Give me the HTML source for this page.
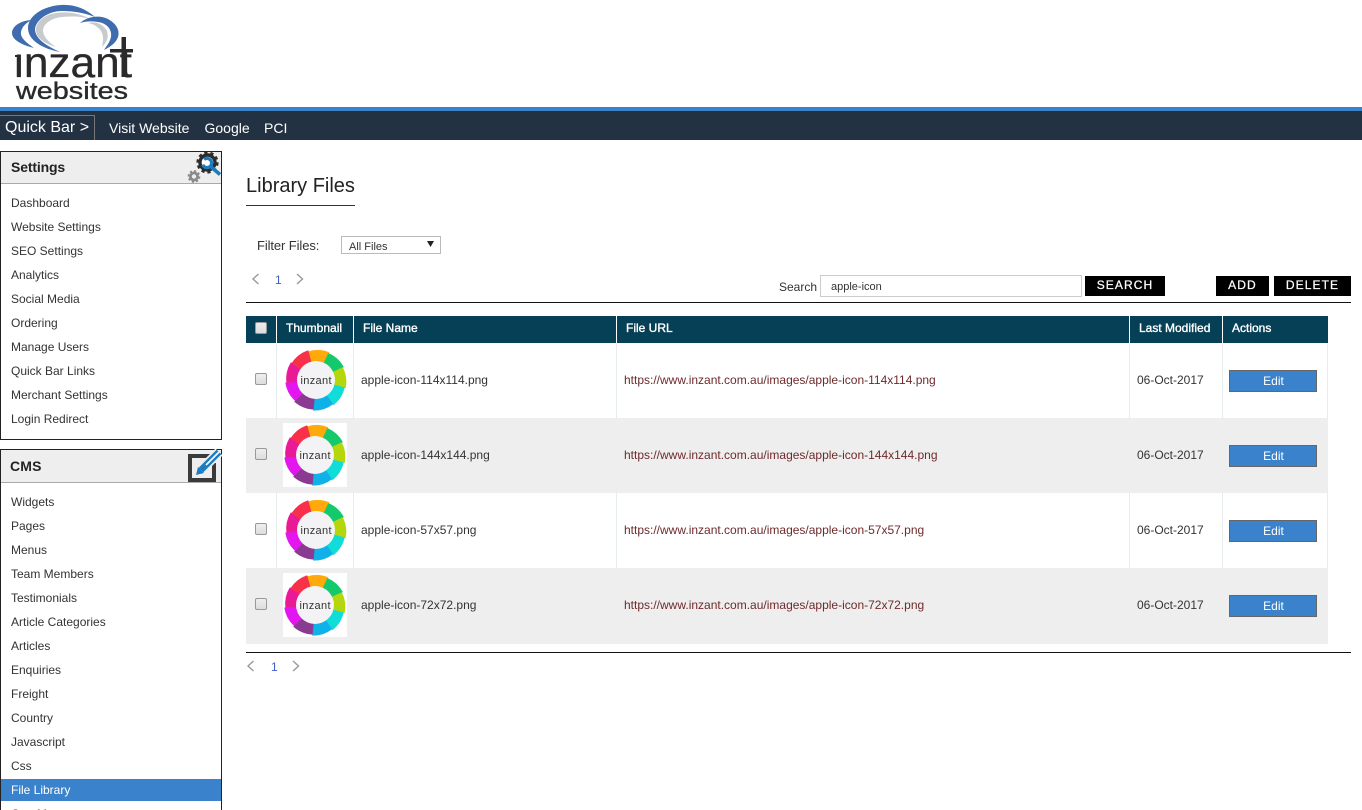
<!DOCTYPE html>
<html>
<head>
<meta charset="utf-8">
<title>Library Files</title>
<style>
html,body{margin:0;padding:0;width:1362px;height:810px;overflow:hidden;background:#fff}
body{position:relative;font-family:"Liberation Sans",Arial,sans-serif;font-size:12px;color:#333}
.a{position:absolute;white-space:nowrap}
.nav{color:#fff;font-size:14px;line-height:18px;top:119px}
.panel{position:absolute;left:0;width:220px;border:1px solid #222;background:#fff;box-sizing:content-box}
.ph{position:absolute;left:0;right:0;top:0;background:#eee;border-bottom:1px solid #aaa;box-sizing:border-box}
.ph b{position:absolute;font-size:14px;line-height:18px;color:#222;letter-spacing:-.15px}
.m{position:absolute;left:10px;line-height:16px;color:#333;white-space:nowrap}
.btn{position:absolute;top:276px;height:20px;background:#000;color:#fff;font-size:12px;line-height:19px;letter-spacing:1.1px;text-align:center;-webkit-text-stroke:.25px #fff}
.line{position:absolute;left:246px;width:1105px;height:1px;background:#111}
.row{position:absolute;left:246px;width:1082px;height:75px}
.row.g{background:#eee}
.v{position:absolute;top:0;bottom:0;width:1px;background:#e6ecee}
.hd .v{background:#fff}
.t{position:absolute;top:29px;line-height:16px;white-space:nowrap;color:#333}
.u{color:#6e2a2a}
.hd{position:absolute;left:246px;top:316px;width:1082px;height:27px;background:#064056}
.hd span{position:absolute;top:4px;line-height:16px;color:#fff;white-space:nowrap;-webkit-text-stroke:.35px #fff}
.cb{position:absolute;left:9px;top:30px;width:12px;height:12px;box-sizing:border-box;background:linear-gradient(#eee,#ddd);border:1px solid #999;border-radius:2px}
.e{position:absolute;left:983px;top:27px;width:88px;height:22px;box-sizing:border-box;background:#3a82cc;border:1px solid #666;color:#fff;line-height:20px;text-align:center;padding-left:1px}
.th{position:absolute;left:37px;top:5px;width:64px;height:64px}
.w{background:#fff}
.pg{position:absolute;color:#3f5fc4;line-height:16px}
svg{position:absolute;overflow:visible}
</style>
</head>
<body>
<svg width="0" height="0" style="left:0;top:0">
<defs>
<path id="seg" d="M-6.2 -16.9L-10.1 -27.7Q0 -31.8 10.4 -28.7L6.2 -16.9Z" stroke-width=".4"/>
<symbol id="ring" viewBox="-32 -32 64 64" overflow="visible">
<use href="#seg" fill="#ffa90a" stroke="#ffa90a" transform="rotate(5)"/>
<use href="#seg" fill="#14c96c" stroke="#14c96c" transform="rotate(45)"/>
<use href="#seg" fill="#b4d60a" stroke="#b4d60a" transform="rotate(85)"/>
<use href="#seg" fill="#10dcd8" stroke="#10dcd8" transform="rotate(125)"/>
<use href="#seg" fill="#0fb2e8" stroke="#0fb2e8" transform="rotate(165)"/>
<use href="#seg" fill="#8a3a90" stroke="#8a3a90" transform="rotate(205)"/>
<use href="#seg" fill="#e316f0" stroke="#e316f0" transform="rotate(245)"/>
<use href="#seg" fill="#e81a96" stroke="#e81a96" transform="rotate(285)"/>
<use href="#seg" fill="#f8304a" stroke="#f8304a" transform="rotate(325)"/>
<circle r="19" fill="#f3f3f5"/>
</symbol>
</defs>
</svg>

<!-- Logo -->
<svg style="left:0;top:0" width="140" height="106" viewBox="0 0 140 106">
<text x="14" y="77" font-family="Liberation Sans" font-size="42.5" fill="#2a2a2a" stroke="#2a2a2a" stroke-width=".3" textLength="118" lengthAdjust="spacingAndGlyphs">inzant</text>
<rect x="12" y="34" width="12" height="20.5" fill="#fff"/>
<rect x="15" y="55" width="5" height="2" fill="#2a2a2a"/>
<rect x="121.5" y="37" width="4.5" height="40" fill="#2a2a2a"/>
<rect x="110" y="49" width="23" height="3.5" fill="#2a2a2a"/>
<path d="M95 17C85 8 73 4 61 5C43 6 28 16 28 28C28 41 44 49 60 52C47 46 35 39 35 29C36 20 48 11 62 11C74 11 85 13 95 17Z" fill="#3f6cae"/>
<path d="M31 20C19 21 12 27 12 33C12 40 22 45 34 48C27 43 20 38 21 32C22 27 25 24 31 20Z" fill="#3f6cae"/>
<path d="M92 20C82 14 68 11 56 13C42 15 35 24 36 31C37 39 46 44 56 47C48 42 43 36 43 30C44 23 52 18 62 17C72 16 83 16 92 20Z" fill="#c8cbce"/>
<path d="M80 23C88 16 100 15 108 19C117 24 120 31 118 37C116 43 110 47 104 50C108 44 112 39 111 33C110 27 105 23 98 22C92 21 86 21 80 23Z" fill="#3f6cae"/>
<path d="M88 23C96 21 103 24 107 31C109 37 107 42 102 47C103 41 104 36 101 31C98 27 94 24 88 23Z" fill="#c8cbce"/>
<text x="16" y="99" font-family="Liberation Sans" font-size="24" fill="#2a2a2a" stroke="#2a2a2a" stroke-width=".35" textLength="112" lengthAdjust="spacingAndGlyphs">websites</text>
</svg>

<!-- Top bars -->
<div class="a" style="left:0;top:107px;width:1362px;height:4px;background:#3a82cc"></div>
<div class="a" style="left:0;top:111px;width:1362px;height:29px;background:#233243"></div>
<div class="a" style="left:-1px;top:115px;width:96px;height:25px;border:1px solid #777;border-bottom:0;box-sizing:border-box"></div>
<div class="a" style="left:5px;top:119px;color:#fff;font-size:16px;line-height:18px">Quick Bar &gt;</div>
<div class="a nav" style="left:109px">Visit Website</div>
<div class="a nav" style="left:204.5px">Google</div>
<div class="a nav" style="left:264px">PCI</div>

<!-- Settings panel -->
<div class="panel" style="top:151px;height:287px">
  <div class="ph" style="height:32px"><b style="left:10px;top:6px">Settings</b></div>
  <div class="m" style="top:43px">Dashboard</div>
  <div class="m" style="top:67px">Website Settings</div>
  <div class="m" style="top:91px">SEO Settings</div>
  <div class="m" style="top:115px">Analytics</div>
  <div class="m" style="top:139px">Social Media</div>
  <div class="m" style="top:163px">Ordering</div>
  <div class="m" style="top:187px">Manage Users</div>
  <div class="m" style="top:211px">Quick Bar Links</div>
  <div class="m" style="top:235px">Merchant Settings</div>
  <div class="m" style="top:259px">Login Redirect</div>
</div>
<svg style="left:184px;top:150px" width="38" height="36" viewBox="0 0 38 36">
<circle cx="23.5" cy="12.5" r="7.5" fill="#fff" stroke="#2c2c2c" stroke-width="3.4"/>
<circle cx="23.5" cy="12.5" r="9.8" fill="none" stroke="#2c2c2c" stroke-width="2.6" stroke-dasharray="3.2 2.9"/>
<circle cx="23" cy="13" r="4.6" fill="none" stroke="#1c7cc0" stroke-width="3.2" stroke-dasharray="23 6" transform="rotate(-130 23 13)"/>
<path d="M26 16L36 24.5" stroke="#1c7cc0" stroke-width="3.6" fill="none"/>
<circle cx="10" cy="26.5" r="3.6" fill="none" stroke="#8a8a8a" stroke-width="2.8"/>
<circle cx="10" cy="26.5" r="5.5" fill="none" stroke="#8a8a8a" stroke-width="1.8" stroke-dasharray="2.2 2.1"/>
</svg>

<!-- CMS panel -->
<div class="panel" style="top:449px;height:380px">
  <div class="ph" style="height:33px"><b style="left:9px;top:7px;letter-spacing:.2px">CMS</b></div>
  <div class="m" style="top:44px">Widgets</div>
  <div class="m" style="top:68px">Pages</div>
  <div class="m" style="top:92px">Menus</div>
  <div class="m" style="top:116px">Team Members</div>
  <div class="m" style="top:140px">Testimonials</div>
  <div class="m" style="top:164px">Article Categories</div>
  <div class="m" style="top:188px">Articles</div>
  <div class="m" style="top:212px">Enquiries</div>
  <div class="m" style="top:236px">Freight</div>
  <div class="m" style="top:260px">Country</div>
  <div class="m" style="top:284px">Javascript</div>
  <div class="m" style="top:308px">Css</div>
  <div style="position:absolute;left:0;top:329px;width:220px;height:22px;background:#3a82cc"></div>
  <div class="m" style="top:332px;color:#fff">File Library</div>
  <div class="m" style="top:356px">Cart Management</div>
</div>
<svg style="left:186px;top:449px" width="36" height="36" viewBox="0 0 36 36">
<path d="M24 7H4V31H28V14" fill="none" stroke="#3a3a3a" stroke-width="4"/>
<path d="M14 22L33 3" stroke="#eee" stroke-width="10" fill="none"/>
<path d="M15 21L33 3" stroke="#1c7cc0" stroke-width="6.5" fill="none"/>
<path d="M10 26L12 18L18 24Z" fill="#1c7cc0"/>
<path d="M20 16L33 3" stroke="#fff" stroke-width="1.6" fill="none"/>
</svg>

<!-- Heading -->
<div class="a" style="left:246px;top:174px;font-size:20px;line-height:24px;color:#222">Library Files</div>
<div class="a" style="left:246px;top:205px;width:109px;height:1px;background:#333"></div>

<!-- Filter -->
<div class="a" style="left:257px;top:238px;font-size:13px;line-height:16px;letter-spacing:-.1px">Filter Files:</div>
<div class="a" style="left:341px;top:236px;width:100px;height:18px;box-sizing:border-box;border:1px solid #bbb;background:#fff"></div>
<div class="a" style="left:349px;top:239px;font-size:11px;line-height:16px">All Files</div>
<svg style="left:427px;top:241px" width="8" height="7" viewBox="0 0 8 7"><path d="M0 0H7L3.5 6Z" fill="#222"/></svg>

<!-- Pagination top -->
<svg style="left:251px;top:273px" width="10" height="12" viewBox="0 0 10 12"><path d="M7.5 1L2 6L7.5 11" fill="none" stroke="#999" stroke-width="1.4"/></svg>
<div class="pg" style="left:275px;top:272px">1</div>
<svg style="left:295px;top:273px" width="10" height="12" viewBox="0 0 10 12"><path d="M2 1L7.5 6L2 11" fill="none" stroke="#999" stroke-width="1.4"/></svg>

<!-- Search and buttons -->
<div class="a" style="left:779px;top:279px;line-height:16px">Search</div>
<div class="a" style="left:820px;top:275px;width:262px;height:22px;box-sizing:border-box;border:1px solid #ccc;background:#fff"></div>
<div class="a" style="left:831px;top:279px;font-size:11px;line-height:16px">apple-icon</div>
<div class="btn" style="left:1085px;width:80px">SEARCH</div>
<div class="btn" style="left:1216px;width:53px">ADD</div>
<div class="btn" style="left:1274px;width:77px">DELETE</div>
<div class="line" style="top:302px"></div>

<!-- Table header -->
<div class="hd">
  <div class="cb" style="top:6px"></div>
  <div class="v" style="left:30px"></div>
  <div class="v" style="left:107px"></div>
  <div class="v" style="left:370px"></div>
  <div class="v" style="left:883px"></div>
  <div class="v" style="left:976px"></div>
  <span style="left:40px">Thumbnail</span>
  <span style="left:117px">File Name</span>
  <span style="left:380px">File URL</span>
  <span style="left:893px">Last Modified</span>
  <span style="left:986px">Actions</span>
</div>

<!-- Row 1 -->
<div class="row" style="top:343px">
  <div class="v" style="left:30px"></div><div class="v" style="left:107px"></div><div class="v" style="left:370px"></div><div class="v" style="left:883px"></div><div class="v" style="left:976px"></div><div class="v" style="left:1081px"></div>
  <div class="cb"></div>
  <svg style="left:38px;top:5px" width="64" height="64"><use href="#ring"/></svg>
  <svg style="left:38px;top:5px" width="64" height="64" viewBox="0 0 64 64"><text x="16.5" y="36" textLength="31" font-family="Liberation Sans" font-size="11" fill="#333">inzant</text></svg>
  <div class="t" style="left:115px">apple-icon-114x114.png</div>
  <div class="t u" style="left:378px">https://www.inzant.com.au/images/apple-icon-114x114.png</div>
  <div class="t" style="left:891px">06-Oct-2017</div>
  <div class="e">Edit</div>
</div>

<!-- Row 2 -->
<div class="row g" style="top:418px">
  <div class="th w"></div>
  <div class="cb"></div>
  <svg style="left:37px;top:5px" width="64" height="64"><use href="#ring"/></svg>
  <svg style="left:37px;top:5px" width="64" height="64" viewBox="0 0 64 64"><text x="16.5" y="36" textLength="31" font-family="Liberation Sans" font-size="11" fill="#333">inzant</text></svg>
  <div class="t" style="left:115px">apple-icon-144x144.png</div>
  <div class="t u" style="left:378px">https://www.inzant.com.au/images/apple-icon-144x144.png</div>
  <div class="t" style="left:891px">06-Oct-2017</div>
  <div class="e">Edit</div>
</div>

<!-- Row 3 -->
<div class="row" style="top:493px">
  <div class="v" style="left:30px"></div><div class="v" style="left:107px"></div><div class="v" style="left:370px"></div><div class="v" style="left:883px"></div><div class="v" style="left:976px"></div><div class="v" style="left:1081px"></div>
  <div class="cb"></div>
  <svg style="left:38px;top:5px" width="64" height="64"><use href="#ring"/></svg>
  <svg style="left:38px;top:5px" width="64" height="64" viewBox="0 0 64 64"><text x="16.5" y="36" textLength="31" font-family="Liberation Sans" font-size="11" fill="#333">inzant</text></svg>
  <div class="t" style="left:115px">apple-icon-57x57.png</div>
  <div class="t u" style="left:378px">https://www.inzant.com.au/images/apple-icon-57x57.png</div>
  <div class="t" style="left:891px">06-Oct-2017</div>
  <div class="e">Edit</div>
</div>

<!-- Row 4 -->
<div class="row g" style="top:568px;height:76px">
  <div class="th w"></div>
  <div class="cb"></div>
  <svg style="left:37px;top:5px" width="64" height="64"><use href="#ring"/></svg>
  <svg style="left:37px;top:5px" width="64" height="64" viewBox="0 0 64 64"><text x="16.5" y="36" textLength="31" font-family="Liberation Sans" font-size="11" fill="#333">inzant</text></svg>
  <div class="t" style="left:115px">apple-icon-72x72.png</div>
  <div class="t u" style="left:378px">https://www.inzant.com.au/images/apple-icon-72x72.png</div>
  <div class="t" style="left:891px">06-Oct-2017</div>
  <div class="e">Edit</div>
</div>

<div class="line" style="top:652px"></div>

<!-- Pagination bottom -->
<svg style="left:246px;top:660px" width="10" height="12" viewBox="0 0 10 12"><path d="M7.5 1L2 6L7.5 11" fill="none" stroke="#999" stroke-width="1.4"/></svg>
<div class="pg" style="left:271px;top:659px">1</div>
<svg style="left:291px;top:660px" width="10" height="12" viewBox="0 0 10 12"><path d="M2 1L7.5 6L2 11" fill="none" stroke="#999" stroke-width="1.4"/></svg>
</body>
</html>
